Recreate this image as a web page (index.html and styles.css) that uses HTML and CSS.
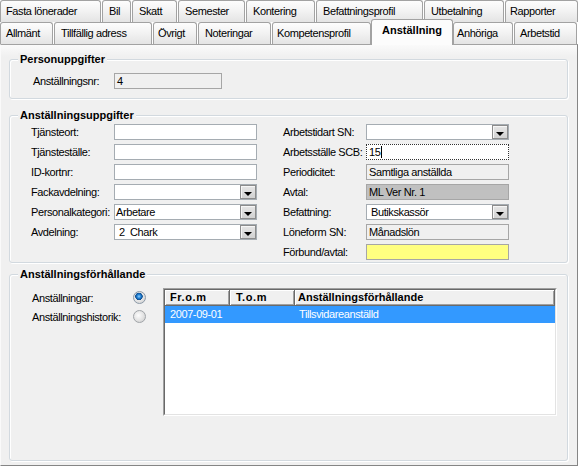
FILE: index.html
```html
<!DOCTYPE html>
<html lang="sv">
<head>
<meta charset="utf-8">
<title>Anställning</title>
<link rel="stylesheet" href="styles.css">
</head>
<body>
<div class="window">
  <div class="tabs">
    <div class="tabrow">
      <div class="tab w-fasta">Fasta lönerader</div>
      <div class="tab w-bil">Bil</div>
      <div class="tab w-skatt">Skatt</div>
      <div class="tab w-sem">Semester</div>
      <div class="tab w-kont">Kontering</div>
      <div class="tab w-bef">Befattningsprofil</div>
      <div class="tab w-utb">Utbetalning</div>
      <div class="tab w-rap">Rapporter</div>
    </div>
    <div class="tabrow">
      <div class="tab w-allm">Allmänt</div>
      <div class="tab w-till">Tillfällig adress</div>
      <div class="tab w-ovr">Övrigt</div>
      <div class="tab w-not">Noteringar</div>
      <div class="tab w-komp">Kompetensprofil</div>
      <div class="tab tab-active w-anst">Anställning</div>
      <div class="tab w-anh">Anhöriga</div>
      <div class="tab w-arb">Arbetstid</div>
    </div>
  </div>

  <div class="panel">
    <fieldset class="group g-person">
      <legend>Personuppgifter</legend>
      <div class="person-row">
        <span class="label w-pl">Anställningsnr:</span>
        <div class="input ro w-nr">4</div>
      </div>
    </fieldset>

    <fieldset class="group g-anst">
      <legend>Anställningsuppgifter</legend>
      <div class="cols">
        <div class="col">
          <span class="label">Tjänsteort:</span>
          <div class="input"></div>
          <span class="label">Tjänsteställe:</span>
          <div class="input"></div>
          <span class="label">ID-kortnr:</span>
          <div class="input"></div>
          <span class="label">Fackavdelning:</span>
          <div class="input select"><span class="val"></span><span class="dd"><i class="arrow"></i></span></div>
          <span class="label">Personalkategori:</span>
          <div class="input select"><span class="val">Arbetare</span><span class="dd"><i class="arrow"></i></span></div>
          <span class="label">Avdelning:</span>
          <div class="input select"><span class="val val-pad">2&nbsp;&nbsp;Chark</span><span class="dd"><i class="arrow"></i></span></div>
        </div>
        <div class="col">
          <span class="label">Arbetstidart SN:</span>
          <div class="input select"><span class="val"></span><span class="dd"><i class="arrow"></i></span></div>
          <span class="label">Arbetsställe SCB:</span>
          <div class="input focus">15<span class="caret"></span></div>
          <span class="label">Periodicitet:</span>
          <div class="input ro">Samtliga anställda</div>
          <span class="label">Avtal:</span>
          <div class="input dark">ML Ver Nr. 1</div>
          <span class="label">Befattning:</span>
          <div class="input select"><span class="val val-pad">Butikskassör</span><span class="dd"><i class="arrow"></i></span></div>
          <span class="label">Löneform SN:</span>
          <div class="input ro">Månadslön</div>
          <span class="label">Förbund/avtal:</span>
          <div class="input yellow"></div>
        </div>
      </div>
    </fieldset>

    <fieldset class="group g-rel">
      <legend>Anställningsförhållande</legend>
      <div class="rel">
        <div class="radios">
          <div class="radio-row"><span class="rlabel">Anställningar:</span><span class="radio on"></span></div>
          <div class="radio-row"><span class="rlabel">Anställningshistorik:</span><span class="radio"></span></div>
        </div>
        <div class="list">
          <div class="list-inner">
            <div class="lhead">
              <div class="hcell c1">Fr.o.m</div>
              <div class="hcell c2">T.o.m</div>
              <div class="hcell c3">Anställningsförhållande</div>
            </div>
            <div class="lrow sel">
              <div class="cell c1">2007-09-01</div>
              <div class="cell c2"></div>
              <div class="cell c3">Tillsvidareanställd</div>
            </div>
          </div>
        </div>
      </div>
    </fieldset>
  </div>
</div>
</body>
</html>
```

FILE: styles.css
```css
* { box-sizing: border-box; }

body {
  margin: 0;
  background: #fff;
  font-family: "Liberation Sans", Arial, sans-serif;
  font-size: 11px;
  letter-spacing: -0.4px;
  color: #000;
}

.window {
  width: 578px;
  height: 466px;
  display: flex;
  flex-direction: column;
}

/* ---------- tabs ---------- */
.tabs { height: 44px; }

.tabrow {
  display: flex;
  height: 22px;
}

.tab {
  height: 22px;
  margin-right: 1px;
  border: 1px solid #a2a2a2;
  border-bottom: none;
  border-radius: 3px 3px 0 0;
  background: linear-gradient(#fdfdfd, #f3f3f3 45%, #e4e4e4);
  display: flex;
  align-items: center;
  justify-content: flex-start;
  padding: 0 0 1px 5px;
  white-space: nowrap;
}

.tab-active {
  position: relative;
  z-index: 2;
  height: 26px;
  margin-top: -3px;
  margin-right: 0;
  background: #fcfcfc;
  font-weight: bold;
  letter-spacing: 0;
  align-items: flex-start;
  justify-content: center;
  padding: 4px 0 0 0;
}

.w-fasta { width: 101px; }
.w-bil { width: 29px; padding-left: 6px; }
.w-skatt { width: 45px; padding-left: 6px; }
.w-sem { width: 67px; padding-left: 6px; }
.w-kont { width: 69px; padding-left: 6px; }
.w-bef { width: 107px; padding-left: 6px; }
.w-utb { width: 80px; padding-left: 6px; }
.w-rap { width: 73px; margin-right: 0; padding-left: 4px; }

.w-allm { width: 53px; }
.w-till { width: 98px; padding-left: 6px; }
.w-ovr { width: 44px; padding-left: 4px; }
.w-not { width: 73px; padding-left: 6px; }
.w-komp { width: 99px; margin-right: 0; padding-left: 4px; }
.w-anst { width: 82px; }
.w-anh { width: 60px; padding-left: 3px; }
.w-arb { width: 63px; }

/* ---------- panel ---------- */
.panel {
  flex: 1;
  display: flex;
  flex-direction: column;
  border-top: 1px solid #a2a2a2;
  border-left: 1px solid #fafafa;
  border-right: 1px solid #858585;
  border-bottom: 1px solid #858585;
  background: linear-gradient(#fafafa, #f0f0f0 12px);
  padding: 0 9px 4px 8px;
}

.group {
  margin: 0;
  padding: 0;
  min-width: 0;
  border: 1px solid #d2d9df;
  border-radius: 3px;
  box-shadow: inset 1px 1px 0 #fff, 1px 1px 0 #fff;
}

.group legend {
  margin-left: 8px;
  padding: 0 2px;
  font-weight: bold;
  letter-spacing: 0;
  line-height: 13px;
  background: #f0f0f0;
}

.g-person { margin-top: 8px; }
.g-anst { margin-top: 10px; }
.g-rel { margin-top: 5px; flex: 1; }

.label {
  line-height: 16px;
  white-space: nowrap;
}

.person-row {
  display: flex;
  align-items: center;
  padding: 7px 0 9px 23px;
}
.w-pl { width: 81px; }
.w-nr { width: 108px; }

.cols {
  display: flex;
  padding: 2px 0 2px 21px;
}

.col {
  display: grid;
  grid-template-columns: 83px 143px;
  grid-auto-rows: 16px;
  row-gap: 4px;
}
.col + .col { margin-left: 26px; }

/* ---------- inputs ---------- */
.input {
  height: 16px;
  border: 1px solid #a5acb2;
  background: #fff;
  padding-left: 2px;
  line-height: 14px;
  white-space: nowrap;
  overflow: hidden;
}
.ro { background: #f0f0f0; border-color: #a6a6a6; }
.dark { background: #c0c0c0; border-color: #a6a6a6; }
.yellow { background: #ffff80; border-color: #a6a6a6; }
.focus { border: 1px dotted #333; display: flex; align-items: center; }
.caret { display: inline-block; width: 1px; height: 12px; background: #000; margin-left: 1px; }

.select {
  display: flex;
  padding-left: 1px;
}
.select .val { flex: 1; }
.select .val-pad { padding-left: 3px; }

.dd {
  width: 16px;
  height: 14px;
  border: 1px solid #8c8c8c;
  background: linear-gradient(#e6e6e6, #d2d2d2);
  box-shadow: inset 1px 1px 0 #f6f6f6;
  display: flex;
  justify-content: center;
  align-items: flex-end;
  padding-bottom: 2px;
}
.arrow {
  width: 0;
  height: 0;
  border-left: 4px solid transparent;
  border-right: 4px solid transparent;
  border-top: 4px solid #000;
}

/* ---------- relation section ---------- */
.rel {
  display: flex;
  padding: 7px 0 0 22px;
}

.radios { width: 131px; }

.radio-row {
  display: flex;
  align-items: center;
  height: 19px;
}
.rlabel { width: 101px; white-space: nowrap; }

.radio {
  width: 13px;
  height: 13px;
  border-radius: 50%;
  border: 1px solid #a0a4a8;
  background: radial-gradient(circle at 40% 40%, #fdfdfd, #e2e2e2 55%, #c8c8c8);
}
.radio.on {
  border-color: #8c9aa8;
  background:
    radial-gradient(circle at 45% 40%, #8fd0ff 0, #1f7fd3 2px, #104c8c 3.5px, transparent 4px),
    radial-gradient(circle at 40% 40%, #fdfdfd, #e2e2e2 55%, #c8c8c8);
}

.list {
  width: 394px;
  height: 128px;
  border: 1px solid;
  border-color: #a0a0a0 #fff #fff #a0a0a0;
}
.list-inner {
  height: 100%;
  border: 1px solid;
  border-color: #696969 #e3e3e3 #e3e3e3 #696969;
  background: #fff;
}

.lhead { display: flex; height: 16px; }
.hcell {
  height: 16px;
  background: #f0f0f0;
  border-right: 1px solid #6a6a6a;
  border-bottom: 1px solid #6a6a6a;
  box-shadow: inset 1px 1px 0 #fff, inset -1px -1px 0 #a0a0a0;
  font-weight: bold;
  letter-spacing: 0;
  line-height: 15px;
  padding-left: 5px;
  white-space: nowrap;
}
.c1 { width: 65px; }
.c2 { width: 65px; padding-left: 6px; }
.c3 { flex: 1; padding-left: 3px; }
.hcell.c1, .hcell.c2 { letter-spacing: 0.6px; }

.lrow { display: flex; height: 17px; line-height: 17px; }
.lrow .cell { padding-left: 5px; white-space: nowrap; }
.lrow .c3 { padding-left: 4px; }
.sel { background: #3399ff; color: #fff; }
```
